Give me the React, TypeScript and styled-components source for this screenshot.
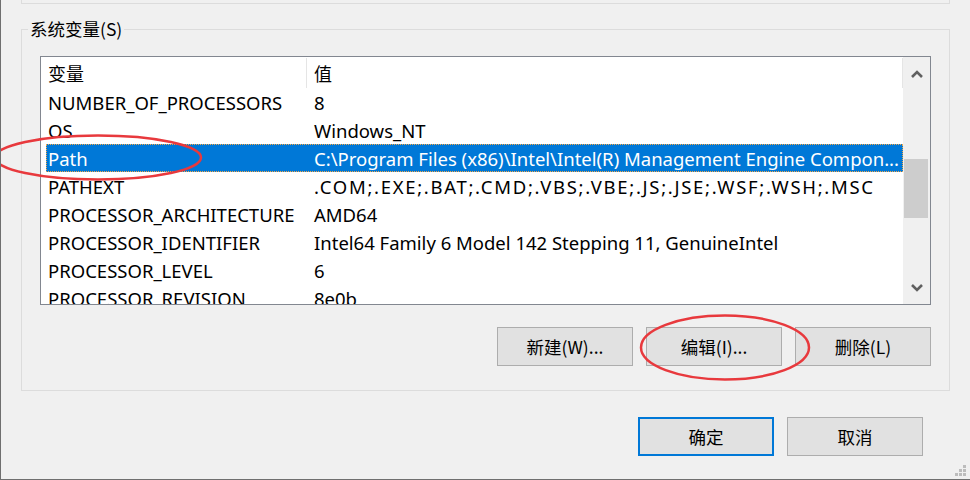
import React from "react";
import styled, { createGlobalStyle } from "styled-components";

const GlobalStyle = createGlobalStyle`
  html, body { margin: 0; padding: 0; background: #f0f0f0; }
  body { font-family: "Noto Sans", "Noto Sans CJK SC", sans-serif; color: #000; }
  * { box-sizing: border-box; }
`;

const Window = styled.div`
  position: relative;
  width: 970px;
  height: 480px;
  overflow: hidden;
  background: #f0f0f0;
  border-left: 1px solid #6f6f6f;
  border-bottom: 1px solid #6f6f6f;
  padding: 0 20px 0 20px;
  display: flex;
  flex-direction: column;
`;

const TopGroupStub = styled.div`
  height: 4px;
  border: 1px solid #dcdcdc;
  border-top: none;
`;

const Group = styled.div`
  position: relative;
  margin-top: 25px;
  height: 362px;
  border: 1px solid #dcdcdc;
  padding: 26px 18px 0 18px;
  display: flex;
  flex-direction: column;
`;

const Legend = styled.span`
  position: absolute;
  left: 6px;
  top: -13px;
  padding: 0 2px;
  background: #f0f0f0;
  font-family: "Noto Sans CJK SC", sans-serif;
  font-size: 17.5px;
  line-height: 24px;
  color: #000;
`;

const ListView = styled.div`
  width: 891px;
  height: 249px;
  border: 1px solid #828790;
  background: #fff;
  display: flex;
  overflow: hidden;
`;

const ListContent = styled.div`
  flex: 1;
  display: flex;
  flex-direction: column;
  overflow: hidden;
  font-size: 18.5px;
`;

const Header = styled.div`
  height: 31px;
  flex: none;
  display: flex;
  align-items: stretch;
`;

const HeaderCell = styled.div<{ $w?: number }>`
  ${(p) => (p.$w ? `width: ${p.$w}px; flex: none;` : "flex: 1;")}
  padding-left: 7px;
  display: flex;
  align-items: center;
  font-family: "Noto Sans CJK SC", sans-serif;
  font-size: 18px;
  border-right: 1px solid #e5e5e5;
  margin: 1px 0 0 0;
`;

const Row = styled.div<{ $sel?: boolean }>`
  height: 28px;
  flex: none;
  margin-left: 5px;
  display: flex;
  align-items: center;
  white-space: nowrap;
  background: ${(p) => (p.$sel ? "#0078d7" : "transparent")};
  color: ${(p) => (p.$sel ? "#fff" : "#000")};
  outline: ${(p) => (p.$sel ? "1px dotted #f5a847" : "none")};
  outline-offset: -1px;
`;

const Cell1 = styled.div`
  width: 261px;
  flex: none;
  padding-left: 2px;
  overflow: hidden;
`;

const Cell2 = styled.div<{ $track?: number }>`
  flex: 1;
  padding-left: 7px;
  overflow: hidden;
  letter-spacing: ${(p) => p.$track ?? 0}px;
`;

const ScrollBar = styled.div`
  width: 27px;
  flex: none;
  background: #f0f0f0;
  display: flex;
  flex-direction: column;
`;

const ArrowButton = styled.div`
  height: 33px;
  flex: none;
  display: flex;
  align-items: center;
  justify-content: center;
  padding-left: 1px;
`;

const Track = styled.div`
  flex: 1;
  padding-top: 69px;
`;

const Thumb = styled.div`
  height: 59px;
  margin: 0 2px 0 1px;
  background: #cdcdcd;
`;

const ButtonRow = styled.div<{ $gap: number }>`
  display: flex;
  justify-content: flex-end;
  gap: ${(p) => p.$gap}px;
`;

const GroupButtons = styled(ButtonRow)`
  margin-top: 22px;
  width: 891px;
`;

const DialogButtons = styled(ButtonRow)`
  margin-top: 26px;
  padding-right: 27px;
`;

const Button = styled.div<{ $default?: boolean }>`
  width: 136px;
  height: 39px;
  background: #e1e1e1;
  border: ${(p) => (p.$default ? "2px solid #0078d7" : "1px solid #adadad")};
  display: flex;
  align-items: center;
  justify-content: center;
  font-family: "Noto Sans CJK SC", sans-serif;
  font-size: 17.5px;
  color: #000;
`;

const Annotation = styled.svg`
  position: absolute;
  left: 0;
  top: 0;
  pointer-events: none;
`;

const Grip = styled.svg`
  position: absolute;
  right: 3px;
  bottom: 2px;
`;

const rows: [string, string, number?][] = [
  ["NUMBER_OF_PROCESSORS", "8"],
  ["OS", "Windows_NT"],
  ["Path", "C:\\Program Files (x86)\\Intel\\Intel(R) Management Engine Compon..."],
  ["PATHEXT", ".COM;.EXE;.BAT;.CMD;.VBS;.VBE;.JS;.JSE;.WSF;.WSH;.MSC", 1.7],
  ["PROCESSOR_ARCHITECTURE", "AMD64"],
  ["PROCESSOR_IDENTIFIER", "Intel64 Family 6 Model 142 Stepping 11, GenuineIntel"],
  ["PROCESSOR_LEVEL", "6"],
  ["PROCESSOR_REVISION", "8e0b"],
];

const Chevron = ({ up }: { up?: boolean }) => (
  <svg width="12" height="8" viewBox="0 0 12 8">
    <polyline
      points={up ? "1,7 6,2 11,7" : "1,1 6,6 11,1"}
      fill="none"
      stroke="#606060"
      strokeWidth="2.6"
    />
  </svg>
);

export default function App() {
  return (
    <>
      <GlobalStyle />
      <Window>
        <TopGroupStub />
        <Group>
          <Legend>系统变量(S)</Legend>
          <ListView>
            <ListContent>
              <Header>
                <HeaderCell $w={266}>变量</HeaderCell>
                <HeaderCell>值</HeaderCell>
              </Header>
              {rows.map(([k, v, t], i) => (
                <Row key={k} $sel={i === 2}>
                  <Cell1>{k}</Cell1>
                  <Cell2 $track={t}>{v}</Cell2>
                </Row>
              ))}
            </ListContent>
            <ScrollBar>
              <ArrowButton>
                <Chevron up />
              </ArrowButton>
              <Track>
                <Thumb />
              </Track>
              <ArrowButton>
                <Chevron />
              </ArrowButton>
            </ScrollBar>
          </ListView>
          <GroupButtons $gap={13}>
            <Button>新建(W)...</Button>
            <Button>编辑(I)...</Button>
            <Button>删除(L)</Button>
          </GroupButtons>
        </Group>
        <DialogButtons $gap={13}>
          <Button $default>确定</Button>
          <Button>取消</Button>
        </DialogButtons>
        <Grip width="12" height="12" viewBox="0 0 12 12">
          <g fill="#bcbcbc">
            <rect x="8" y="0" width="3" height="3" />
            <rect x="4" y="4" width="3" height="3" />
            <rect x="8" y="4" width="3" height="3" />
            <rect x="0" y="8" width="3" height="3" />
            <rect x="4" y="8" width="3" height="3" />
            <rect x="8" y="8" width="3" height="3" />
          </g>
        </Grip>
        <Annotation width="970" height="480" viewBox="0 0 970 480">
          <ellipse cx="97" cy="157.5" rx="103" ry="22" fill="none" stroke="#e8393d" strokeWidth="2.5" />
          <ellipse cx="724" cy="347.5" rx="84" ry="32" fill="none" stroke="#e8393d" strokeWidth="2.5" />
        </Annotation>
      </Window>
    </>
  );
}
